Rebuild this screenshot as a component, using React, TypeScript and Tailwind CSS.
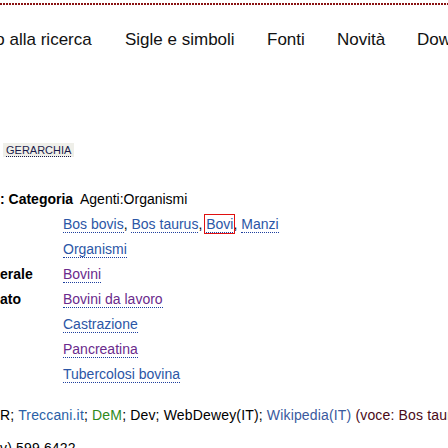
import React from "react";

const blue = "text-[#2b56a6] border-b border-dotted border-[#1d3f9e]";
const purple = "text-[#6a2a8c] border-b border-dotted border-[#1d3f9e]";

function L({ children, v = false }: { children: React.ReactNode; v?: boolean }) {
  return <span className={v ? purple : blue}>{children}</span>;
}

export default function App() {
  const rows: { label: string; content: React.ReactNode }[] = [
    {
      label: "",
      content: (
        <>
          <L>Bos bovis</L>, <L>Bos taurus</L>,{" "}
          <span className="outline outline-[1.5px] outline-[#e01010] outline-offset-[1px]">
            <L>Bovi</L>
          </span>
          , <L>Manzi</L>
        </>
      ),
    },
    { label: "", content: <L>Organismi</L> },
    { label: "erale", content: <L v>Bovini</L> },
    { label: "ato", content: <L v>Bovini da lavoro</L> },
    { label: "", content: <L>Castrazione</L> },
    { label: "", content: <L v>Pancreatina</L> },
    { label: "", content: <L>Tubercolosi bovina</L> },
  ];

  return (
    <div className="w-[448px] h-[448px] overflow-hidden bg-white text-black font-['Liberation_Sans',Arial,sans-serif]">
      <div className="mt-[3px] h-[2px] bg-[repeating-linear-gradient(90deg,#8a1212_0px,#8a1212_2px,transparent_2px,transparent_3px)]" />
      <nav className="mt-[25px] ml-[-50px] flex whitespace-nowrap text-[17px] leading-[20px] text-[#111]">
        <span className="w-[175px] shrink-0">Ritorno alla ricerca</span>
        <span className="w-[142px] shrink-0">Sigle e simboli</span>
        <span className="w-[70px] shrink-0">Fonti</span>
        <span className="w-[80px] shrink-0">Novità</span>
        <span className="shrink-0">Download</span>
      </nav>

      <div className="mt-[93px] ml-[3px] flex">
        <span className="bg-[#efefe9] px-[3px] text-[11px] leading-[14px] h-[14px] text-[#1a1a4a]">
          <span className="border-b border-dotted border-[#1a1a4a]">GERARCHIA</span>
        </span>
      </div>

      <div className="mt-[29.5px] text-[14px] leading-[25px]">
        <div className="flex h-[25px] whitespace-nowrap">
          <span className="font-bold w-[80px]">: Categoria</span>
          <span>Agenti:Organismi</span>
        </div>
        {rows.map((r, i) => (
          <div key={i} className="grid grid-cols-[63px_1fr] h-[25px] whitespace-nowrap">
            <span className="font-bold">{r.label}</span>
            <span>{r.content}</span>
          </div>
        ))}
      </div>

      <div className="mt-[18.5px] text-[14px] leading-[20px] whitespace-nowrap tracking-[0.16px]">
        <div>
          R; <span className="text-[#2b5fa6]">Treccani.it</span>;{" "}
          <span className="text-[#2f8a1c]">DeM</span>; Dev; WebDewey(IT);{" "}
          <span className="text-[#3a5a9e]">Wikipedia(IT)</span>{" "}
          <span className="text-[#4a0a18]">(voce: Bos taurus)</span>
        </div>
        <div className="mt-[13px]">v) 599.6422</div>
      </div>
    </div>
  );
}
